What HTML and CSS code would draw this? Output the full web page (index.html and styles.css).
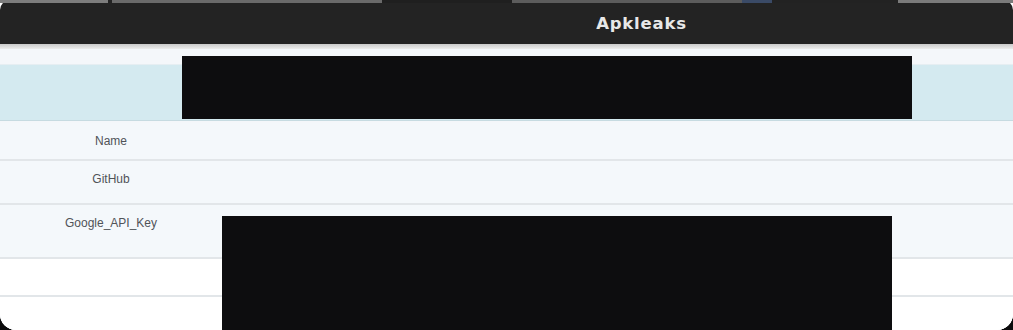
FILE: index.html
```html
<!DOCTYPE html>
<html lang="en">
<head>
  <meta charset="utf-8" />
  <meta name="viewport" content="width=device-width, initial-scale=1.0">
  <title>Apkleaks</title>
  <link rel="stylesheet" href="styles.css">
</head>
<body>
  <div class="screen">
    <!-- tab strip -->
    <div class="tabs">
      <span class="tab tab--a"></span>
      <span class="tab tab--b"></span>
      <span class="tab tab--c"></span>
      <span class="tab tab--d"></span>
      <span class="tab tab--e"></span>
      <span class="tab tab--f"></span>
      <span class="tab tab--g"></span>
    </div>

    <!-- barra superior -->
    <div class="topbar">
      <h1 class="topbar__title">Apkleaks</h1>
    </div>
    <div class="topbar__shadow"></div>

    <!-- tabla -->
    <div class="content">
      <div class="table">
        <div class="row row--head"></div>
        <div class="row row--name"><span class="cell">Name</span></div>
        <div class="row row--github"><span class="cell">GitHub</span></div>
        <div class="row row--google"><span class="cell">Google_API_Key</span></div>
        <div class="row row--empty"></div>
        <div class="row row--last"></div>
      </div>
    </div>

    <!-- redactado -->
    <div class="redact redact--1"></div>
    <div class="redact redact--2"></div>
  </div>
</body>
</html>
```

FILE: styles.css
```css
*, *::before, *::after {
  margin: 0;
  padding: 0;
  box-sizing: border-box;
}

body {
  background: #0b0b0c;
  width: 1013px;
  height: 330px;
  overflow: hidden;
  font-family: "Liberation Sans", Arial, sans-serif;
}

.screen {
  position: relative;
  width: 1013px;
  height: 330px;
  background: #ffffff;
  border-radius: 0 0 16px 16px;
  overflow: hidden;
}

/* ===== tabs ===== */
.tabs {
  display: flex;
  height: 3px;
  background: #1c1c1c;
}
.tab { display: block; height: 100%; }
.tab--a { width: 108px; background: #7d7d7d; }
.tab--b { width: 270px; background: #6a6a6a; margin-left: 4px; }
.tab--c { width: 130px; background: #1f1f1f; }
.tab--d { width: 230px; background: #5c5c5c; }
.tab--e { width: 30px; background: #3a4a66; }
.tab--f { width: 126px; background: #222; }
.tab--g { flex: 1; background: #7a7a7a; }

/* ===== barra ===== */
.topbar {
  height: 44px;
  margin-top: -3px;
  background: #232323;
  border-radius: 10px 10px 0 0;
  display: flex;
  align-items: center;
  justify-content: center;
  padding-left: 270px;
  padding-top: 3px;
}
.topbar__title {
  font-family: "DejaVu Sans", sans-serif;
  font-weight: bold;
  font-size: 16.5px;
  letter-spacing: 0.8px;
  color: #e8e8e8;
}
.topbar__shadow {
  height: 5px;
  background: linear-gradient(to bottom, #c9c9c9, #ececec);
}

/* ===== contenido ===== */
.content {
  background: #f4f7fa;
  padding-top: 15px;
  height: 282px;
}

.row {
  display: flex;
  border-bottom: 2px solid #e2e6e9;
}
.cell {
  width: 222px;
  text-align: center;
  font-size: 12px;
  color: #505358;
}
.row--head {
  height: 57px;
  background: #d4eaf0;
  border-top: 1px solid #e6eef2;
  border-bottom: 1px solid #c6dbe1;
  margin-bottom: 2px;
}
.row--name {
  height: 38px;
  background: #f4f8fb;
  align-items: center;
}
.row--github {
  height: 44px;
  background: #f4f8fb;
  padding-top: 11px;
}
.row--google {
  height: 54px;
  background: #f4f8fb;
  padding-top: 11px;
}
.row--empty {
  height: 38px;
  background: #ffffff;
}
.row--last {
  height: 40px;
  background: #ffffff;
  border-bottom: none;
}

/* ===== redactado ===== */
.redact {
  position: absolute;
  background: #0d0d0f;
}
.redact--1 { left: 182px; top: 56px; width: 730px; height: 63px; }
.redact--2 { left: 222px; top: 216px; width: 670px; height: 114px; }
```
